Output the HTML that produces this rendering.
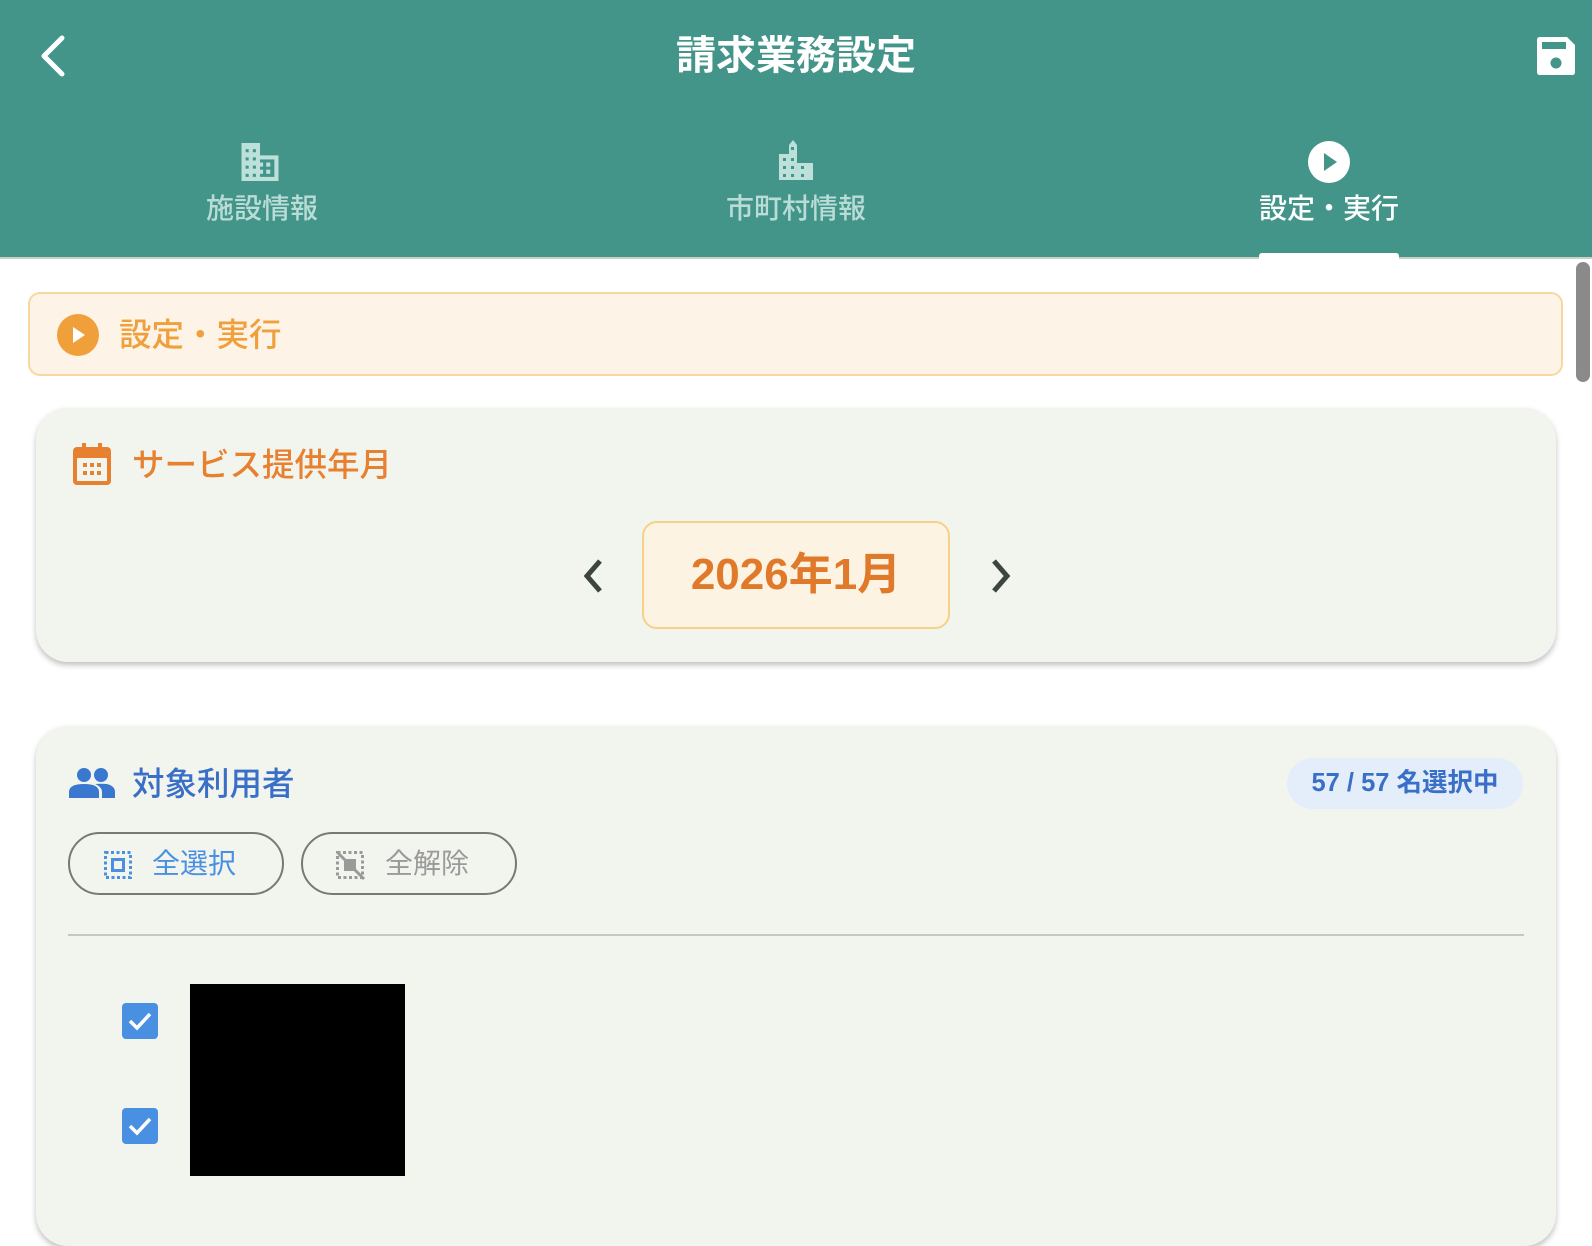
<!DOCTYPE html>
<html><head><meta charset="utf-8"><style>
*{margin:0;padding:0;box-sizing:border-box}
body{width:1592px;height:1198px;overflow:hidden;background:#fff;font-family:"Liberation Sans","Noto Sans CJK JP",sans-serif;position:relative}
.abs{position:absolute}
.hdr{left:0;top:0;width:1592px;height:259px;background:#43958a;border-bottom:2px solid #c9cfc9}
.title{left:0;width:1592px;top:30px;text-align:center;color:#fff;font-size:40px;font-weight:bold;line-height:52px}
.tab{width:300px;text-align:center;font-size:28px;line-height:36px;top:191px;font-weight:500}
.card{background:#f2f4ee;border-radius:32px;box-shadow:0 3px 6px rgba(0,0,0,.25)}
</style></head><body>
<div class="abs hdr"></div>
<svg class="abs" style="left:36px;top:34px" width="32" height="44" viewBox="0 0 32 44"><path d="M26 4 L8 22 L26 40" fill="none" stroke="#fff" stroke-width="5" stroke-linecap="round" stroke-linejoin="round"/></svg>
<div class="abs title">請求業務設定</div>
<svg class="abs" style="left:1537px;top:37px" width="38" height="38" viewBox="0 0 38 38"><path d="M3 0H30L38 8V35Q38 38 35 38H3Q0 38 0 35V3Q0 0 3 0Z" fill="#fff"/><rect x="5" y="5" width="24" height="7" fill="#43958a"/><circle cx="19" cy="26" r="5.5" fill="#43958a"/></svg>
<svg class="abs" style="left:239px;top:143px" width="42" height="38" viewBox="0 0 36 37"><path d="M0 0H18V12H36V37H0Z" fill="#bde0da"/><g fill="#43958a"><rect x="4" y="6" width="3" height="3"/><rect x="11" y="6" width="3" height="3"/><rect x="4" y="14" width="3" height="3"/><rect x="11" y="14" width="3" height="3"/><rect x="4" y="22" width="3" height="3"/><rect x="11" y="22" width="3" height="3"/><rect x="4" y="30" width="3" height="3"/><rect x="11" y="30" width="3" height="3"/><rect x="18" y="16" width="14" height="17"/></g><g fill="#bde0da"><rect x="18" y="19" width="3" height="4"/><rect x="18" y="26" width="3" height="4"/><rect x="24" y="19" width="4" height="4"/><rect x="24" y="26" width="4" height="4"/></g></svg>
<svg class="abs" style="left:777px;top:140px" width="38" height="40" viewBox="0 0 34 40"><path d="M0 14H10V5L14 0L18 5V23H34V40H0Z" fill="#bde0da"/><g fill="#43958a"><rect x="12" y="7" width="3" height="3"/><rect x="4" y="18" width="3" height="3"/><rect x="12" y="18" width="3" height="3"/><rect x="4" y="26" width="3" height="3"/><rect x="12" y="26" width="3" height="3"/><rect x="22" y="26" width="3" height="3"/><rect x="4" y="34" width="3" height="3"/><rect x="12" y="34" width="3" height="3"/><rect x="22" y="34" width="3" height="3"/></g></svg>
<svg class="abs" style="left:1308px;top:141px" width="42" height="42" viewBox="0 0 42 42"><circle cx="21" cy="21" r="21" fill="#fff"/><path d="M16 12L29 21L16 30Z" fill="#43958a"/></svg>
<div class="abs tab" style="left:112px;color:#b9dcd6">施設情報</div>
<div class="abs tab" style="left:646px;color:#b9dcd6">市町村情報</div>
<div class="abs tab" style="left:1179px;color:#fff">設定・実行</div>
<div class="abs" style="left:1259px;top:253px;width:140px;height:6px;background:#fff;border-radius:3px 3px 0 0"></div>
<div class="abs" style="left:1576px;top:262px;width:14px;height:120px;background:#8a8a8a;border-radius:7px"></div>
<div class="abs" style="left:28px;top:292px;width:1535px;height:84px;background:#fdf3e7;border:2px solid #f7d9a0;border-radius:12px"></div>
<svg class="abs" style="left:57px;top:314px" width="42" height="42" viewBox="0 0 42 42"><circle cx="21" cy="21" r="21" fill="#f0a03a"/><path d="M16 13L28 21L16 29Z" fill="#fff"/></svg>
<div class="abs" style="left:119px;top:313px;font-size:32.5px;line-height:44px;color:#f0a03a;font-weight:500">設定・実行</div>
<div class="abs card" style="left:36px;top:408px;width:1520px;height:254px"></div>
<svg class="abs" style="left:73px;top:443px" width="38" height="42" viewBox="0 0 38 42"><rect x="9" y="0" width="4" height="8" fill="#e8812f"/><rect x="25" y="0" width="4" height="8" fill="#e8812f"/><rect x="0" y="4" width="38" height="38" rx="4" fill="#e8812f"/><rect x="4" y="15" width="30" height="23" fill="#f2f4ee"/><g fill="#e8812f"><rect x="10" y="20" width="4" height="4"/><rect x="17" y="20" width="4" height="4"/><rect x="24" y="20" width="4" height="4"/><rect x="10" y="28" width="4" height="4"/><rect x="17" y="28" width="4" height="4"/><rect x="24" y="28" width="4" height="4"/></g></svg>
<div class="abs" style="left:132px;top:443px;font-size:32.5px;line-height:44px;color:#e8812f;font-weight:500">サービス提供年月</div>
<svg class="abs" style="left:580px;top:558px" width="28" height="36" viewBox="0 0 28 36"><path d="M20 3L7 18L20 33" fill="none" stroke="#3d4540" stroke-width="5"/></svg>
<div class="abs" style="left:642px;top:521px;width:308px;height:108px;background:#fdf3e2;border:2px solid #f7d08a;border-radius:15px;text-align:center;line-height:104px;font-size:44px;font-weight:bold;color:#e07a2a">2026年1月</div>
<svg class="abs" style="left:986px;top:558px" width="28" height="36" viewBox="0 0 28 36"><path d="M8 3L21 18L8 33" fill="none" stroke="#3d4540" stroke-width="5"/></svg>
<div class="abs card" style="left:36px;top:726px;width:1520px;height:520px"></div>
<svg class="abs" style="left:69px;top:768px" width="46" height="30" viewBox="0 0 46 30"><circle cx="15" cy="7" r="7" fill="#3a78d0"/><circle cx="32" cy="7" r="7" fill="#3a78d0"/><path d="M0 30V24Q0 16 15 16Q30 16 30 24V30Z" fill="#3a78d0"/><path d="M26 16Q32 15.5 38 16Q46 18 46 24V30H33V24Q33 19 26 16Z" fill="#3a78d0"/></svg>
<div class="abs" style="left:132px;top:762px;font-size:32.5px;line-height:44px;color:#3a6fc8;font-weight:500">対象利用者</div>
<div class="abs" style="left:1287px;top:758px;width:236px;height:51px;background:#e3eefa;border-radius:26px;text-align:center;line-height:51px;font-size:25.5px;font-weight:bold;color:#3a6fc8">57 / 57 名選択中</div>
<div class="abs" style="left:68px;top:832px;width:216px;height:63px;border:2px solid #777a72;border-radius:32px"></div>
<svg class="abs" style="left:104px;top:851px" width="28" height="28" viewBox="0 0 28 28"><rect x="1.5" y="1.5" width="25" height="25" fill="none" stroke="#4a90e2" stroke-width="3" stroke-dasharray="3 2.5"/><rect x="7" y="7" width="14" height="14" fill="#4a90e2"/><rect x="10" y="10" width="8" height="8" fill="#f2f4ee"/></svg>
<div class="abs" style="left:152px;top:845px;font-size:28px;line-height:38px;color:#4a90e2">全選択</div>
<div class="abs" style="left:301px;top:832px;width:216px;height:63px;border:2px solid #777a72;border-radius:32px"></div>
<svg class="abs" style="left:336px;top:851px" width="30" height="30" viewBox="0 0 30 30"><rect x="1.5" y="1.5" width="25" height="25" fill="none" stroke="#9a9a9a" stroke-width="3" stroke-dasharray="3 2.5"/><rect x="8" y="8" width="12" height="12" fill="#9a9a9a"/><path d="M2 2L28 28" stroke="#9a9a9a" stroke-width="3"/></svg>
<div class="abs" style="left:385px;top:845px;font-size:28px;line-height:38px;color:#9a9a9a">全解除</div>
<div class="abs" style="left:68px;top:934px;width:1456px;height:2px;background:#c5c8c0"></div>
<svg class="abs" style="left:122px;top:1003px" width="36" height="36" viewBox="0 0 36 36"><rect width="36" height="36" rx="4" fill="#4a90e2"/><path d="M8 18L15 25L28 11" fill="none" stroke="#fff" stroke-width="3.5"/></svg>
<svg class="abs" style="left:122px;top:1108px" width="36" height="36" viewBox="0 0 36 36"><rect width="36" height="36" rx="4" fill="#4a90e2"/><path d="M8 18L15 25L28 11" fill="none" stroke="#fff" stroke-width="3.5"/></svg>
<div class="abs" style="left:190px;top:984px;width:215px;height:192px;background:#000"></div>
</body></html>
